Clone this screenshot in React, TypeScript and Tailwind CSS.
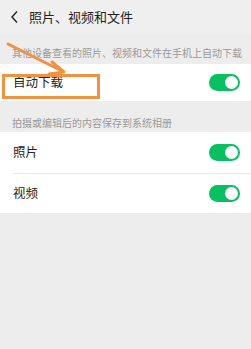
import React from "react";

const Toggle = () => (
  <div className="w-[31px] h-[17px] rounded-full bg-[#07c160] relative shrink-0">
    <div className="absolute right-[2px] top-[2px] w-[13px] h-[13px] rounded-full bg-white" />
  </div>
);

export default function App() {
  return (
    <div
      className="w-[251px] h-[349px] bg-[#ededed] relative overflow-hidden"
      style={{ fontFamily: '"Noto Sans CJK SC", "Noto Sans", sans-serif' }}
    >
      <div className="h-[33px] flex items-center bg-[#efefef]">
        <svg width="10" height="14" viewBox="0 0 10 14" className="ml-[10px]">
          <path d="M7 1.5 L2 7 L7 12.5" fill="none" stroke="#222" strokeWidth="1.4" />
        </svg>
        <span className="ml-[9px] text-[13px] text-[#222]">照片、视频和文件</span>
      </div>
      <div className="h-[31px] flex items-center pl-[12px] pt-[7px] text-[10px] text-[#999]">
        其他设备查看的照片、视频和文件在手机上自动下载
      </div>
      <div className="h-[37px] bg-white flex items-center justify-between pl-[13px] pr-[11px]">
        <span className="text-[12.5px] text-[#222]">自动下载</span>
        <Toggle />
      </div>
      <div className="h-[31px] flex items-center pl-[12px] pt-[12px] text-[10px] text-[#999]">
        拍摄或编辑后的内容保存到系统相册
      </div>
      <div className="bg-white">
        <div className="h-[41px] flex items-center justify-between pl-[13px] pr-[11px]">
          <span className="text-[12.5px] text-[#222]">照片</span>
          <Toggle />
        </div>
        <div className="ml-[13px] h-px bg-[#e6e6e6]" />
        <div className="h-[39px] flex items-center justify-between pl-[13px] pr-[11px]">
          <span className="text-[12.5px] text-[#222]">视频</span>
          <Toggle />
        </div>
      </div>
      {/* annotation */}
      <div className="absolute left-[2px] top-[74px] w-[98px] h-[25px] border-[3px] border-[#f0923f]" />
      <svg className="absolute left-0 top-0" width="251" height="349" viewBox="0 0 251 349">
        <path d="M8 44 L62 71" stroke="#f0923f" strokeWidth="3" strokeLinecap="round" />
        <path d="M52 62 L64 72 L49 74" fill="none" stroke="#f0923f" strokeWidth="3" strokeLinecap="round" strokeLinejoin="round" />
      </svg>
    </div>
  );
}
